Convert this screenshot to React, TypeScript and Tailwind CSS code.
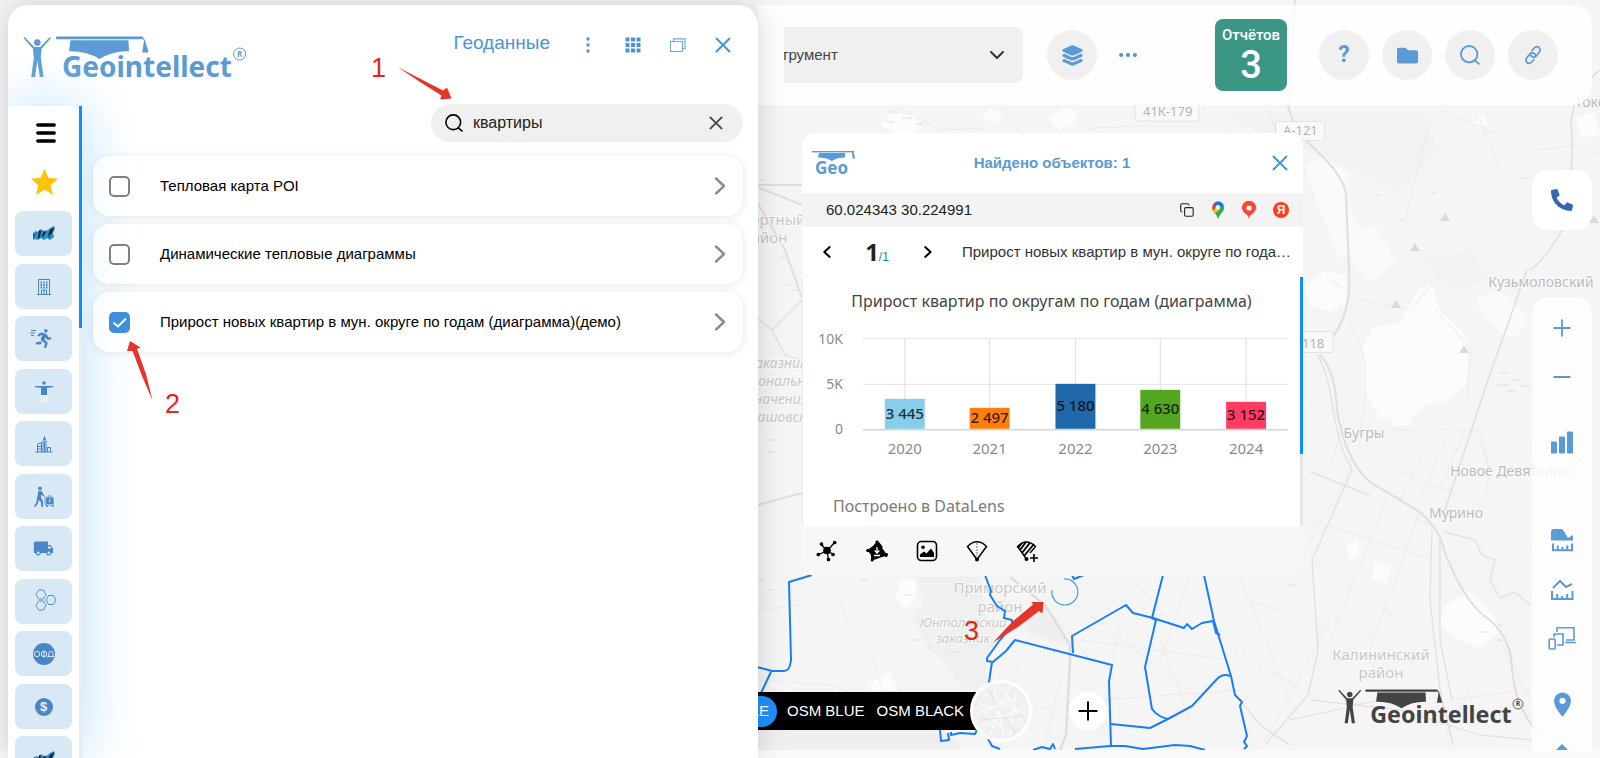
import type { ReactNode } from "react";
import { FaFolder, FaPhoneAlt, FaRunning } from "react-icons/fa";
import { IoEllipsisHorizontal, IoLayers } from "react-icons/io5";
import { MdLocalShipping, MdLocationOn, MdStar } from "react-icons/md";

const layers = [
  { id: "poi", title: "Тепловая карта POI", checked: false },
  { id: "dynamic", title: "Динамические тепловые диаграммы", checked: false },
  {
    id: "growth",
    title: "Прирост новых квартир в мун. округе по годам (диаграмма)(демо)",
    checked: true,
  },
];

const chartData = [
  { year: "2020", label: "3 445", x: 102, top: 79, fill: "#87ceeb" },
  { year: "2021", label: "2 497", x: 187, top: 88, fill: "#ff7f0e" },
  { year: "2022", label: "5 180", x: 273, top: 64, fill: "#1f68a9" },
  { year: "2023", label: "4 630", x: 358, top: 70, fill: "#54a520" },
  { year: "2024", label: "3 152", x: 444, top: 82, fill: "#ff3d64" },
];

function Logo({ className }: { className: string }) {
  return (
    <svg viewBox="0 0 226 52" className={className} fill="currentColor">
      <circle cx="15.3" cy="8.6" r="3.3" />
      <path d="M2.6 3 L12.3 13 H18.3 L28 3 L29 4 L19.6 14.8 L18.8 24 L21.6 43 H17.8 L15.4 27 L13 43 H9.2 L11.8 24 L11 14.8 L1.6 4 Z" />
      <rect x="34" y="2.6" width="87" height="2.6" rx="1" />
      <path d="M48.5 6.2 H106.5 L107 17.3 Q91 16.6 77.5 25 Q64 16.6 47 17.3 Z" />
      <path d="M120 3 Q122.6 4 123.2 7 L126.6 18.4 H120.2 L122 7 Z" />
      <text x="40" y="42.5" className="font-['Noto_Sans'] text-[28px] font-bold">
        Geointellect
      </text>
      <circle cx="217.6" cy="20" r="6" fill="none" stroke="currentColor" strokeWidth="1" />
      <text x="217.6" y="23" textAnchor="middle" className="font-['Noto_Sans'] text-[8px] font-bold">
        R
      </text>
    </svg>
  );
}

function SmallLogo() {
  return (
    <svg viewBox="0 0 44 30" className="w-11 h-[30px] text-[#5b9bd5]" fill="currentColor">
      <rect x="0" y="3" width="42" height="1.4" />
      <path d="M7 5 H33 V9.6 Q25 9.6 20 13 Q14 9.6 6 9.6 Z" />
      <path d="M40 3.4 H41.6 L43 10.5 H40.6 Z" />
      <text x="3" y="26" className="font-['Noto_Sans'] text-[17px] font-bold">
        Geo
      </text>
    </svg>
  );
}

function SearchIcon({ className }: { className: string }) {
  return (
    <svg viewBox="0 0 20 20" className={className} fill="none" stroke="currentColor" strokeWidth="1.8" strokeLinecap="round">
      <circle cx="9.2" cy="9.2" r="8.2" />
      <path d="M15 15.6 L18.8 18.8" />
    </svg>
  );
}

function CloseIcon({ className }: { className: string }) {
  return (
    <svg viewBox="0 0 16 16" className={className} fill="none" stroke="currentColor" strokeWidth="2" strokeLinecap="round">
      <path d="M1.5 1.5 L14.5 14.5 M14.5 1.5 L1.5 14.5" />
    </svg>
  );
}

function Chevron({ d, className }: { d: string; className: string }) {
  return (
    <svg viewBox="0 0 20 20" className={className} fill="none" stroke="currentColor" strokeLinecap="round" strokeLinejoin="round">
      <path d={d} />
    </svg>
  );
}

/* Category icons */

function RegionIcon() {
  return (
    <svg viewBox="0 0 24 16" className="w-6 h-4">
      <path d="M1 7 L4 5 L6 6 L9 3 L12 5 L16 4 L18 2 L22 0 L23 3 L21 7 L22 11 L18 14 L15 12 L12 14 L9 12 L6 14 L3 13 L1 14 Z" fill="#2b8fc4" />
      <path d="M7 4 L9 5 L8 11 L6 13 Z M12 5 L14 6 L11 11 L10 10 Z M18 4 L22 1 L20 7 L18 9 L17 13 L16.5 8 Z M1 9 L2.6 8 L2 12 Z" fill="#0c2233" />
    </svg>
  );
}

function BuildingIcon() {
  return (
    <svg viewBox="0 0 16 18" className="w-4 h-[18px]" fill="none" stroke="currentColor">
      <path d="M2.5 16 V1.5 H13.5 V16 M1 16.5 H15" />
      <path d="M4.5 4.5 H6 M7.2 4.5 H8.8 M10 4.5 H11.5 M4.5 7 H6 M7.2 7 H8.8 M10 7 H11.5 M4.5 9.5 H6 M7.2 9.5 H8.8 M10 9.5 H11.5" strokeWidth="1.8" />
      <path d="M5.5 16 V12 H10.5 V16 M8 12 V16" />
    </svg>
  );
}

function RunnerIcon() {
  return (
    <div className="relative">
      <FaRunning size={19} />
      <svg viewBox="0 0 6 8" className="absolute -left-1 top-0 w-1.5 h-2" stroke="currentColor">
        <path d="M1 1.5 H6 M0 4 H5 M1 6.5 H4" />
      </svg>
    </div>
  );
}

function PersonIcon() {
  return (
    <svg viewBox="0 0 20 24" className="w-5 h-6" fill="currentColor">
      <circle cx="10" cy="3" r="1.8" />
      <path d="M1 6 H19 V7.2 L13 7.8 V15 H7 V7.8 L1 7.2 Z" />
      <path d="M7.5 15 V23 M12.5 15 V23 M10 15 V22" stroke="#f3f8fc" strokeWidth="1.2" />
    </svg>
  );
}

function CityIcon() {
  return (
    <svg viewBox="0 0 18 18" className="w-[18px] h-[18px]" fill="none" stroke="currentColor">
      <path d="M0.5 17 H17.5 M8 17 V6 L9.5 2 L11 6 V17 M9.5 6 V17 M2.5 17 V9 L6.5 7.5 V17 M2.5 11.5 H6 M2.5 14 H6 M12.5 12 V17 M12.5 12.5 H15.5 V17" />
      <path d="M9.5 0 L10.4 5 H8.6 Z" fill="currentColor" stroke="none" />
    </svg>
  );
}

function LuggageIcon() {
  return (
    <svg viewBox="0 0 20 22" className="w-5 h-[22px]" fill="currentColor">
      <circle cx="6" cy="2.4" r="1.9" />
      <path d="M4.4 5 H7.4 L10.4 9.4 L9.8 10.4 L7.2 8.4 V12 L9 15 V21 H7.4 L6.8 15.8 L4.8 14 L3.6 18 L1.2 21 L0 20 L2.2 17 Z" />
      <rect x="12" y="11.5" width="7.6" height="6.5" rx="0.6" />
      <path d="M14 11.5 V10 H17.6 V11.5 M11 10 V19 H20" fill="none" stroke="currentColor" strokeWidth="0.8" />
      <circle cx="13" cy="20" r="1" />
      <circle cx="18.6" cy="20" r="1" />
      <path d="M15.8 13 V16.6" stroke="#d9e8f5" />
    </svg>
  );
}

function HexIcon() {
  return (
    <svg viewBox="0 0 22 22" className="mb-1 ml-1 w-[22px] h-[22px]" fill="none" stroke="currentColor" strokeWidth="0.9">
      <path d="M3.6 1 H8.4 L11 5.5 L8.4 10 H3.6 L1 5.5 Z" />
      <path d="M3.6 12 H8.4 L11 16.5 L8.4 21 H3.6 L1 16.5 Z" />
      <path d="M13.6 6.5 H18.4 L21 11 L18.4 15.5 H13.6 L11 11 Z" />
    </svg>
  );
}

function OfdIcon() {
  return (
    <svg viewBox="0 0 24 24" className="w-6 h-6">
      <circle cx="12" cy="12" r="11" fill="currentColor" />
      <g fill="none" stroke="#d9e8f5">
        <circle cx="5" cy="12" r="2.7" />
        <circle cx="12" cy="12" r="2.7" />
        <path d="M12 8.5 V15.5 M15.6 15.5 V14.5 H22 V15.5 M16.8 14.5 V11.5 Q17 9.3 19 9.3 Q21 9.3 21 11.5 V14.5" />
      </g>
    </svg>
  );
}

function DollarIcon() {
  return (
    <span className="flex size-[18px] items-center justify-center rounded-full bg-[#4a86c5] text-[13px] font-bold text-[#e8f2fa]">
      $
    </span>
  );
}

const categories: { name: string; icon: ReactNode }[] = [
  { name: "Регион", icon: <RegionIcon /> },
  { name: "Здания", icon: <BuildingIcon /> },
  { name: "Трафик", icon: <RunnerIcon /> },
  { name: "Население", icon: <PersonIcon /> },
  { name: "Город", icon: <CityIcon /> },
  { name: "Туризм", icon: <LuggageIcon /> },
  { name: "Логистика", icon: <MdLocalShipping size={21} /> },
  { name: "Сетки", icon: <HexIcon /> },
  { name: "ОФД", icon: <OfdIcon /> },
  { name: "Финансы", icon: <DollarIcon /> },
  { name: "Другие", icon: <RegionIcon /> },
];

function MapBackground() {
  return (
    <svg
      viewBox="0 0 1600 750"
      preserveAspectRatio="xMidYMid slice"
      className="absolute inset-x-0 top-0 h-[calc(100%-8px)] w-full font-['Noto_Sans']"
      fill="none"
    >
      <rect width="1600" height="750" fill="#f5f5f5" />
      {/* open ground */}
      <g fill="#fcfcfc">
        <path d="M1305 165 L1325 158 L1350 175 L1345 205 L1372 240 L1340 260 L1322 215 Z M1352 235 L1375 225 L1395 262 L1372 282 L1352 262 Z" opacity="0.7" />
        <path d="M1362 350 L1372 328 L1400 322 L1418 290 L1432 284 L1440 312 L1462 330 L1470 352 L1466 385 L1450 400 L1425 405 L1410 420 L1380 418 L1366 395 Z" />
        <path d="M1445 605 L1470 592 L1492 614 L1500 632 L1480 648 L1455 638 L1440 622 Z" />
        <path d="M1305 285 L1325 272 L1345 275 L1348 300 L1330 312 L1310 305 Z" />
        <path d="M880 125 L892 112 L915 116 L922 128 L905 138 Z M1048 118 L1062 108 L1078 110 L1074 124 L1058 130 Z M990 108 L1002 116 L996 124 L982 118 Z" />
        <path d="M1475 300 L1500 290 L1530 320 L1512 340 L1488 322 Z" opacity="0.7" />
        <path d="M900 582 L918 577 L914 602 L905 610 L896 598 Z M868 684 L888 672 L898 690 L884 702 Z M824 694 L838 700 L830 708 Z" />
        <path d="M1575 118 L1594 112 L1600 135 L1582 138 Z M1472 122 L1484 114 L1488 124 L1478 130 Z" />
        <path d="M1375 560 L1392 568 L1386 584 L1372 578 Z M1345 545 L1358 540 L1360 556 L1350 560 Z M1388 405 L1408 402 L1410 425 L1392 426 Z" />
      </g>
      <g fill="#efefef">
        <path d="M757 697 L900 690 L960 745 V750 H757 Z" />
        <path d="M915 577 L925 600 L912 620 L930 650 L942 660 L965 690 L988 690 L985 660 L1000 640 L985 610 L980 577 Z" opacity="0.8" />
        <path d="M1020 620 L1048 605 L1068 645 L1030 635 Z" />
        <path d="M1220 115 L1420 112 L1440 150 L1400 190 L1330 160 Z M1420 260 L1470 250 L1490 280 L1450 290 Z" opacity="0.5" />
      </g>
      {/* minor streets */}
      <g stroke="#ebebeb" strokeWidth="1">
        <path d="M1310 470 L1440 530 M1310 520 L1430 560 M1310 560 L1430 640 M1325 610 L1440 680 M1350 470 L1300 560 M1390 490 L1330 640 M1420 510 L1370 650 M1310 400 L1345 415 L1330 470" />
        <path d="M1425 450 L1400 500 M1445 440 L1420 500 M1465 430 L1440 490 M1395 470 L1470 500 M1380 430 L1480 430 L1490 470" />
        <path d="M1070 600 L1200 700 M1040 600 L1090 660 M1100 577 L1140 620 M1130 577 L1170 620 M1080 640 L1230 660 M1100 700 L1240 690 M1160 640 L1190 720 M1120 620 L1100 740 M1190 577 L1160 660" />
        <path d="M1000 690 L1110 735 M1020 660 L1000 740 M1060 680 L1045 745 M1240 577 L1290 700 M1250 600 L1330 630 M1235 650 L1320 700 M1260 750 L1330 620" />
        <path d="M840 600 L848 622 L872 655 L885 700 M757 680 L830 685 L870 700 M757 610 L800 605" />
        <path d="M1330 280 L1360 300 L1410 310 L1440 275 M1350 320 L1365 360 L1366 400 L1358 440 M1435 310 L1455 330 L1470 350 L1468 400 L1440 425" />
        <path d="M1440 110 L1500 135 L1540 150 L1575 145 L1600 155 M1480 120 L1500 170 L1485 190 M1270 110 L1290 190 L1310 200 M1430 120 L1405 220" />
        <path d="M900 108 L940 130 L980 128 M1000 108 L1020 132 M1090 128 L1150 126 M1200 108 L1230 132" />
        <path d="M1480 440 L1490 470 L1485 500 M1500 640 L1530 700 M1540 600 L1590 650 M1470 690 L1440 745 M1450 700 L1530 690" />
      </g>
      {/* main roads and railways */}
      <g stroke="#dedede" strokeWidth="2">
        <path d="M1295 0 L1288 105 Q1293 130 1318 152 Q1345 178 1346 195 L1349 270 Q1352 315 1330 340 M1320 355 Q1335 370 1337 410 Q1345 460 1370 482 Q1400 500 1420 512" />
        <path d="M1420 512 Q1440 530 1444 550 Q1465 605 1490 620 Q1512 640 1512 670 Q1516 710 1540 735" />
        <path d="M1318 355 Q1330 380 1333 410 Q1340 450 1350 465 L1352 470 L1312 560 L1318 650 L1308 695 L1265 745" strokeWidth="1.2" />
        <path d="M1440 535 V600 L1440 640 L1452 700 M1432 530 L1430 600 L1440 690 L1453 745" strokeWidth="1.2" />
        <path d="M1527 270 L1488 380 L1445 510" strokeWidth="1.5" />
        <path d="M1600 70 Q1575 90 1571 120 Q1575 180 1562 230 Q1545 260 1530 270" strokeWidth="1.5" />
        <path d="M1010 577 L1045 605 L1070 645 L1070 660 L1066 735 L1060 750" strokeWidth="2.5" />
        <path d="M757 187 L802 205 M757 185 H802 M757 202 L785 250 L802 298 M757 505 L802 493" />
        <path d="M757 318 L772 330 L802 300 M772 330 L785 355 L802 360" strokeWidth="1.2" />
        <path d="M1240 700 L1260 725 L1290 745 M1310 700 L1400 710 L1480 735 L1532 740" strokeWidth="1.2" />
        <path d="M1310 472 L1370 495 M1290 720 L1380 700" strokeWidth="1.2" />
        <path d="M1445 532 L1475 540 L1482 555 L1495 560 L1490 580 L1500 598 L1515 592 L1530 605" stroke="#e6e6e6" />
      </g>
      {/* marsh hatching */}
      <path
        d="M890 112 h8 M902 118 h10 M886 122 h8 M915 124 h8 M760 180 h5 M762 240 h6 M780 258 h8 M785 285 h6 M792 290 h6 M765 440 h10 M768 452 h7 M758 580 h6 M768 590 h5 M762 600 h5 M1500 373 h8 M1512 380 h9 M1498 385 h12 M1520 386 h10 M1508 391 h8 M860 580 h8 M905 595 h8 M960 590 h8 M985 610 h8 M950 652 h8 M970 645 h8 M912 640 h8 M925 648 h8 M1375 195 h5 M1430 193 h6 M1400 220 h4 M1290 585 h8 M1480 632 h7 M1497 625 h6 M1495 640 h7 M1520 178 h6"
        stroke="#dedede"
      />
      <g fill="#dadada">
        <path d="M1391 308 l5 -8 5 8 Z M1459 353 l5 -8 5 8 Z M1440 221 l5 -8 5 8 Z M1410 251 l5 -8 5 8 Z M1589 223 l5 -8 5 8 Z" />
      </g>
      {/* road numbers */}
      <g stroke="#e2e2e2" fill="#f9f9f9">
        <rect x="1135" y="98" width="64" height="23" rx="2" />
        <rect x="1275.5" y="121.5" width="49" height="19" rx="2" />
        <rect x="1290" y="331.5" width="43" height="21" rx="2" />
      </g>
      <g fill="#b4b4b4" className="text-[13px]">
        <text x="1143" y="116">41К-179</text>
        <text x="1283" y="135">А-121</text>
        <text x="1302" y="348">118</text>
      </g>
      <g fill="#bcbcbc" textAnchor="middle" stroke="#fafafa" strokeWidth="2" paintOrder="stroke">
        <g className="text-[14px]">
          <text x="1541" y="287">Кузьмоловский</text>
          <text x="1364" y="438">Бугры</text>
          <text x="1510" y="476">Новое Девяткино</text>
          <text x="1456" y="518">Мурино</text>
          <text x="1602" y="107">Токсово</text>
        </g>
        <g className="text-[15px]" fill="#c8c8c8">
          <text x="1381" y="660">Калининский</text>
          <text x="1381" y="678">район</text>
          <text x="1000" y="593">Приморский</text>
          <text x="1000" y="612">район</text>
          <text x="765" y="225">Курортный</text>
          <text x="765" y="243">район</text>
        </g>
        <g className="text-[13px] italic" fill="#c8c8c8">
          <text x="963" y="627">Юнтоловский</text>
          <text x="963" y="643">заказник</text>
        </g>
        <g className="text-[14px] italic" fill="#c8c8c8">
          <text x="778" y="368">заказник</text>
          <text x="778" y="386">регионального</text>
          <text x="778" y="404">значения</text>
          <text x="778" y="422">Левашовский</text>
        </g>
      </g>
      {/* municipal borders */}
      <g stroke="#1a7df5" strokeWidth="2" strokeLinejoin="round">
        <path d="M812 575 L789 582 L791 660 Q790 671 784 671 H772 L757 667 M771 672 L761 693" />
        <path d="M985 575 L991 591 L990 595 L997 606 L1005 611 L1004 618 L1012 620 L1012 626 L1000 640 L987 658 V661 L993 662 L1006 651 L1015 640 L1112 665 L1109 681 L1111 746" />
        <path d="M992 662 L990 675 L988 690 M940 730 L941 741 L949 740 L948 733 M951 732 V735 L960 733 L975 734 L978 728" />
        <path d="M1073 653 L1072 636 L1126 605 L1133 613 L1153 618 L1184 628 L1187 624 L1192 629 L1202 623 L1213 621 L1216 633 L1220 635" />
        <path d="M1163 575 L1152 618 L1156 620 L1145 667 L1152 709 Q1158 717 1168 719 L1192 706 L1217 679 Q1223 673 1230 676" />
        <path d="M1204 575 L1214 621 L1231 676 L1235 695 L1242 702 L1240 706 L1247 736 L1244 742 L1247 746 L1244 749" />
        <path d="M1111 724 L1150 728 L1168 719 M1075 749 L1110 746 H1125 L1143 749 L1175 745 L1190 746 L1205 750" />
        <path d="M988 739 L992 746 L1000 749 M1033 750 L1042 747 L1050 749 L1053 744 L1055 749 M1072 575 L1074 579 L1084 575" />
      </g>
      <path d="M1052 590 A13 13 0 1 0 1064 579" stroke="#4a9be0" strokeWidth="1.2" />
    </svg>
  );
}

function Chart() {
  return (
    <svg viewBox="0 0 498 146" className="block w-full font-['Noto_Sans']">
      <path d="M60 18.5 H486 M60 64.5 H486" stroke="#e2e2e2" />
      <path d="M60 110 H486" stroke="#d6d6d6" strokeWidth="1.5" />
      <g fill="#8a8a8a" textAnchor="end" className="text-[14px]">
        <text x="40" y="24">10K</text>
        <text x="40" y="69">5K</text>
        <text x="40" y="114">0</text>
      </g>
      {chartData.map((d) => (
        <g key={d.year} textAnchor="middle">
          <path d={`M${d.x} 19 V${d.top}`} stroke="#dedede" />
          <rect x={d.x - 20} y={d.top} width="40" height={109 - d.top} fill={d.fill} />
          <text x={d.x} y={(d.top + 109) / 2 + 5} fill="#000" fillOpacity="0.8" className="text-[15px] font-medium">
            {d.label}
          </text>
          <text x={d.x} y="134" fill="#8a8a8a" className="text-[15px]">
            {d.year}
          </text>
        </g>
      ))}
    </svg>
  );
}

function SidePanel() {
  return (
    <section className="relative z-10 ml-2 mt-[5px] flex max-w-[750px] flex-1 flex-col overflow-hidden rounded-t-[20px] bg-white shadow-[0_0_30px_rgba(0,0,0,0.16)]">
      <header className="flex h-[101px] shrink-0 items-center pb-[22px] pl-3.5 pr-[25px] text-[#4a94d6]">
        <Logo className="mt-[30px] h-[52px] w-[226px] text-[#5b9bd5]" />
        <h1 className="mb-0.5 ml-auto text-[19px]">Геоданные</h1>
        <button aria-label="Меню" className="ml-[28px] flex w-5 justify-center">
          <svg viewBox="0 0 4 16" className="h-4 w-1" fill="currentColor">
            <path d="M0.5 0.5 h3 v3 h-3 Z M0.5 6.5 h3 v3 h-3 Z M0.5 12.5 h3 v3 h-3 Z" />
          </svg>
        </button>
        <button aria-label="Плитка" className="ml-[25px] flex w-5 justify-center">
          <svg viewBox="0 0 16 16" className="size-4" fill="currentColor">
            <path d="M0.5 0.5 h4 v4 h-4 Z M6 0.5 h4 v4 h-4 Z M11.5 0.5 h4 v4 h-4 Z M0.5 6 h4 v4 h-4 Z M6 6 h4 v4 h-4 Z M11.5 6 h4 v4 h-4 Z M0.5 11.5 h4 v4 h-4 Z M6 11.5 h4 v4 h-4 Z M11.5 11.5 h4 v4 h-4 Z" />
          </svg>
        </button>
        <button aria-label="Окно" className="ml-[25px] flex w-5 justify-center">
          <svg viewBox="0 0 16 14" className="h-3.5 w-4" fill="none" stroke="currentColor" strokeOpacity="0.8">
            <rect x="0.5" y="3.5" width="12" height="10" />
            <path d="M3.5 3.5 V0.8 H15 V10.5 H12.5" strokeWidth="1.2" />
          </svg>
        </button>
        <button aria-label="Закрыть" className="ml-[25px] flex w-5 justify-center">
          <CloseIcon className="size-4" />
        </button>
      </header>

      <div className="flex min-h-0 flex-1">
        <nav className="flex shrink-0 rounded-tr-xl bg-white shadow-[0_0_60px_#b9dffb]">
          <div className="flex w-[71px] flex-col items-center overflow-hidden pt-[17px]">
            <button aria-label="Список" className="pl-1">
              <svg viewBox="0 0 20 20" className="size-5" stroke="#000" strokeWidth="3.4" strokeLinecap="round">
                <path d="M1.8 2 H18.2 M1.8 10 H18.2 M1.8 18 H18.2" />
              </svg>
            </button>
            <button aria-label="Избранное" className="mb-3 mt-[23px] pl-0.5 text-[#ffc20e]">
              <MdStar size={33} />
            </button>
            {categories.map((c, i) => (
              <button
                key={i}
                aria-label={c.name}
                className="flex h-[45px] w-[57px] shrink-0 items-center justify-center rounded-lg bg-[#d9e8f5] text-[#4a86c5] odd:mb-2 even:mb-[7px]"
              >
                {c.icon}
              </button>
            ))}
          </div>
          <div className="w-[3px] bg-[#ebebeb]">
            <div className="h-[34%] bg-[#0a8fff]" />
          </div>
        </nav>

        <div className="relative flex flex-1 flex-col pl-[11px] pr-[15px]">
          <label className="-mt-0.5 flex h-[38px] w-[312px] items-center self-end rounded-full bg-[#f0f0f0] pl-3.5 pr-5">
            <SearchIcon className="size-[18px] text-black" />
            <input
              aria-label="Поиск"
              defaultValue="квартиры"
              className="ml-2.5 min-w-0 flex-1 bg-transparent text-[16px] text-[#222] outline-none"
            />
            <button aria-label="Очистить">
              <CloseIcon className="size-3.5 text-[#444]" />
            </button>
          </label>
          <ul className="mt-3.5 flex flex-col gap-2">
            {layers.map((l) => (
              <li
                key={l.id}
                className="flex h-[60px] items-center rounded-2xl bg-white/70 pl-4 pr-3.5 shadow-[0_1px_8px_rgba(0,0,0,0.1)]"
              >
                <span className="relative flex size-[21px]">
                  <input
                    id={l.id}
                    type="checkbox"
                    defaultChecked={l.checked}
                    className="peer size-[21px] appearance-none rounded-[5px] border-2 border-[#808080] bg-white checked:border-[#3f8fdb] checked:bg-[#3f8fdb]"
                  />
                  <svg viewBox="0 0 21 21" className="pointer-events-none absolute inset-0 hidden peer-checked:block" fill="none" stroke="#fff" strokeWidth="1.8" strokeLinecap="round">
                    <path d="M5 11 L9 14.5 L16.5 7" />
                  </svg>
                </span>
                <label htmlFor={l.id} className="ml-[30px] flex-1 text-[15px] text-black">
                  {l.title}
                </label>
                <Chevron d="M7 2.5 L15 10 L7 17.5" className="size-5 stroke-[2.4] text-[#8c8c8c]" />
              </li>
            ))}
          </ul>
        </div>
      </div>
    </section>
  );
}

function RoundButton({ label, children }: { label: string; children: ReactNode }) {
  return (
    <button aria-label={label} className="flex size-[50px] items-center justify-center rounded-full bg-[#f0f0f0] text-[#5b9bd5]">
      {children}
    </button>
  );
}

function TopBar() {
  return (
    <header className="mt-[5px] flex h-[100px] shrink-0 items-center rounded-r-[20px] bg-white/85 pl-[26px] pr-[34px]">
      <div className="relative flex h-14 w-[239px] justify-end overflow-hidden rounded-r-lg bg-[#f0f0f0]">
        <select
          aria-label="Инструмент"
          className="h-14 w-[268px] shrink-0 appearance-none bg-transparent text-[15px] text-[#444]"
        >
          <option>Инструмент</option>
        </select>
        <Chevron d="M4 7 L10 13 L16 7" className="pointer-events-none absolute right-4 top-[18px] size-5 stroke-2 text-[#333]" />
      </div>
      <div className="ml-6">
        <RoundButton label="Слои">
          <IoLayers size={25} />
        </RoundButton>
      </div>
      <button aria-label="Ещё" className="ml-5 text-[#4a94d6]">
        <IoEllipsisHorizontal size={22} />
      </button>
      <button className="ml-auto flex size-[72px] flex-col items-center justify-center rounded-lg bg-[#3c9684] font-['Roboto'] text-white">
        <span className="text-[15px] font-medium leading-5">Отчётов</span>
        <span className="text-[38px] font-medium leading-10">3</span>
      </button>
      <div className="ml-8 flex gap-[13px]">
        <RoundButton label="Помощь">
          <span className="font-['Roboto'] text-[23px] font-bold">?</span>
        </RoundButton>
        <RoundButton label="Проекты">
          <FaFolder size={21} />
        </RoundButton>
        <RoundButton label="Поиск">
          <SearchIcon className="size-5" />
        </RoundButton>
        <RoundButton label="Ссылка">
          <svg viewBox="0 0 20 20" className="size-5" fill="none" stroke="currentColor" strokeWidth="1.7" strokeLinecap="round">
            <path d="M9 5.5 L11.2 3 Q13.6 0.4 16 2.5 Q18.2 4.8 16 7.6 L13 11 Q10.6 13.2 8.2 11.2 Q7 9.8 7.4 8.2" />
            <path d="M11 14.5 L8.8 17 Q6.4 19.6 4 17.5 Q1.8 15.2 4 12.4 L7 9 Q9.4 6.8 11.8 8.8 Q13 10.2 12.6 11.8" />
          </svg>
        </RoundButton>
      </div>
    </header>
  );
}

function CardTools() {
  return (
    <footer className="flex h-[50px] items-center gap-[28px] rounded-b-[14px] bg-[#f7f7f7] pl-[14px]">
      <button aria-label="Связи">
        <svg viewBox="0 0 22 22" className="size-[22px]" stroke="#000" strokeWidth="1.3">
          <path d="M11 11 L5 4 M11 11 L18.5 2.5 M11 11 L2.5 14.5 M11 11 L17 14 M11 11 L12.5 19.5" />
          <circle cx="11" cy="10.5" r="3.2" />
          <circle cx="5.5" cy="4" r="1.2" />
          <circle cx="18.7" cy="2.5" r="1.2" />
          <circle cx="2.3" cy="14.5" r="1.2" />
          <circle cx="17" cy="14.5" r="1.2" />
          <circle cx="12.5" cy="19.5" r="1.2" />
        </svg>
      </button>
      <button aria-label="Скачать полигон">
        <svg viewBox="0 0 22 22" className="size-[22px]" stroke="#000" strokeLinejoin="round">
          <path d="M11 2 L16 8.5 L20.5 15 L6 20 L5 14 L1.5 10.5 L7 6.5 Z" />
          <path d="M11 2 L15 7 M20 15.5 L20.5 14.5 M6.2 19.6 V20 M2 10.5 H1.6" strokeWidth="3" strokeLinecap="round" />
          <path d="M11 7 V12.5 M8.7 10.5 L11 13 L13.3 10.5 M8 15.5 H14" stroke="#fff" fill="none" strokeWidth="1.3" />
        </svg>
      </button>
      <button aria-label="Изображение">
        <svg viewBox="0 0 22 22" className="size-[22px]" fill="none" stroke="#000" strokeWidth="1.6">
          <rect x="1.5" y="1.5" width="19" height="19" rx="4" />
          <path d="M4 17 V14.5 L8 11.5 L10.5 13.5 L15 8.5 L18 13 V17 Z" fill="#000" stroke="none" />
          <circle cx="7" cy="7.2" r="1.8" fill="#000" stroke="none" />
        </svg>
      </button>
      <button aria-label="Сектор">
        <svg viewBox="0 0 22 22" className="size-[22px]" fill="none" stroke="#000" strokeWidth="1.5">
          <path d="M11 19.5 L1.5 6.5 Q11 -3 20.5 6.5 Z" />
          <path d="M11 3 V16" strokeWidth="1.2" strokeDasharray="2 1" stroke="#888" />
          <circle cx="11" cy="19.5" r="2" fill="#000" stroke="none" />
        </svg>
      </button>
      <button aria-label="Добавить сектор">
        <svg viewBox="0 0 22 22" className="size-[22px]" fill="none" stroke="#000" strokeWidth="1.4">
          <path d="M10.5 19 L1.5 6.5 Q10.5 -2.5 19.5 6.5 L14 13" />
          <path d="M4 10 L10 2 M6 13 L14 2.6 M8 16 L18 4 M2 8 L6 3" strokeWidth="1.8" />
          <circle cx="10.5" cy="19" r="2" fill="#000" stroke="none" />
          <path d="M18 14 V22 M14 18 H22" strokeWidth="1.6" />
        </svg>
      </button>
    </footer>
  );
}

function InfoCard() {
  return (
    <article className="mt-7 w-[501px] max-w-full">
      <div className="flex h-[60px] items-center rounded-t-[14px] bg-white pl-[10px] pr-[15px] text-[#5b9bd5]">
        <SmallLogo />
        <h2 className="flex-1 pr-6 text-center text-[15px] font-bold">Найдено объектов: 1</h2>
        <button aria-label="Закрыть карточку" className="text-[#4a94d6]">
          <CloseIcon className="size-4" />
        </button>
      </div>
      <div className="flex h-[34px] items-center bg-[#f3f3f3] pl-6 pr-3.5">
        <span className="flex-1 text-[15px] text-[#222]">60.024343 30.224991</span>
        <button aria-label="Копировать">
          <svg viewBox="0 0 14 14" className="size-3.5" fill="none" stroke="#222" strokeWidth="1.1">
            <rect x="4.6" y="4.6" width="8.6" height="8.6" rx="1.2" />
            <path d="M2.4 9 Q0.7 9 0.7 7.5 V2 Q0.7 0.7 2 0.7 H7.5 Q9 0.7 9 2.4" />
          </svg>
        </button>
        <a href="#google" aria-label="Google Карты" className="ml-[17px]">
          <svg viewBox="0 0 14 18" className="h-[18px] w-3.5">
            <path d="M7 18 Q6 14 3 11 Q1 9 1 7 L7 6 L13 5 Q14 8 11.5 11 Q8 14.5 7 18 Z" fill="#34a853" />
            <path d="M1 7 Q1 4 3 2.5 L6 5 L8.5 9 L4 12.3 Q1 9.5 1 7 Z" fill="#fbbc04" />
            <path d="M1.6 4.5 Q2 3.5 3 2.3 L6 5 L2.2 9.4 Q0.6 7 1.6 4.5 Z" fill="#ea4335" />
            <path d="M2.8 2.4 Q5 0 8 0.4 Q11.5 1 12.8 4.4 L8 8 L5 5 Z" fill="#1a73e8" />
            <circle cx="7" cy="6.2" r="2.2" fill="#fff" />
          </svg>
        </a>
        <a href="#yandex-maps" aria-label="Яндекс Карты" className="ml-[17px]">
          <svg viewBox="0 0 14 18" className="h-[18px] w-3.5">
            <path d="M7 18 Q6.6 14.5 4 13 A7 7 0 1 1 10 13 Q7.4 14.5 7 18 Z" fill="#f43" />
            <circle cx="7" cy="7" r="2.6" fill="#fff" />
          </svg>
        </a>
        <a
          href="#yandex"
          aria-label="Яндекс"
          className="ml-[17px] flex size-4 items-center justify-center rounded-full bg-[#fc3f1d] text-[12px] font-bold text-white"
        >
          Я
        </a>
      </div>
      <div className="flex h-[50px] items-center bg-white pl-4">
        <button aria-label="Назад">
          <Chevron d="M13 4.5 L7 10 L13 15.5" className="size-[18px] stroke-[2.2] text-black" />
        </button>
        <span className="flex w-[82px] items-baseline justify-center text-[#1b7fa8]">
          <b className="font-['Noto_Sans'] text-[24px] text-[#222]">1</b>
          <span className="text-[12px]">/1</span>
        </span>
        <button aria-label="Вперёд">
          <Chevron d="M8 4.5 L14 10 L8 15.5" className="size-[18px] stroke-[2.2] text-black" />
        </button>
        <p className="ml-[26px] mr-2 flex-1 truncate text-[15px] text-[#333]">
          Прирост новых квартир в мун. округе по годам (диаграмма)(демо)
        </p>
      </div>
      <div className="flex h-[249px] bg-white">
        <div className="flex min-w-0 flex-1 flex-col border-l border-[#ececec]">
          <h3 className="mt-3 text-center font-['Noto_Sans'] text-[16px] leading-6 text-[#444]">
            Прирост квартир по округам по годам (диаграмма)
          </h3>
          <div className="mt-[7px]">
            <Chart />
          </div>
          <a href="#datalens" className="ml-[30px] mt-[28px] font-['Noto_Sans'] text-[16px] leading-6 text-[#7a7a7a]">
            Построено в DataLens
          </a>
        </div>
        <div className="w-[3px] bg-[#e6e6e6]">
          <div className="h-[71%] bg-[#0a8fff]" />
        </div>
      </div>
      <CardTools />
    </article>
  );
}

function BottomBar() {
  return (
    <div className="mt-auto mb-4 flex h-[62px] items-center">
      <div className="flex h-[38px] items-center bg-black pr-3 text-[15px] text-white">
        <button className="-ml-[52px] mr-[10px] h-[31px] rounded-full bg-[#1e90ff] pl-2 pr-2">
          SIMPLE
        </button>
        <button className="mr-3">OSM BLUE</button>
        <button>OSM BLACK</button>
      </div>
      <button aria-label="Подложка" className="-ml-[6px]">
        <svg viewBox="0 0 62 62" className="size-[62px]">
          <circle cx="31" cy="31" r="29.5" fill="#f0f0f0" stroke="#fff" strokeWidth="3" />
          <path
            d="M8 22 L52 46 M14 14 L56 34 M24 6 L34 58 M40 6 L20 56 M6 34 L50 16 M12 46 L56 26 M30 4 L54 44 M10 28 L40 56 M46 12 L40 54"
            stroke="#fafafa"
            strokeWidth="1.4"
          />
          <path d="M10 40 L54 36 M18 10 L46 54" stroke="#e2e2e2" />
        </svg>
      </button>
      <button aria-label="Добавить подложку" className="ml-[37px] flex size-[38px] items-center justify-center rounded-full bg-white">
        <svg viewBox="0 0 20 20" className="size-5" stroke="#000" strokeWidth="2">
          <path d="M10 0.5 V19.5 M0.5 10 H19.5" />
        </svg>
      </button>
      <Logo className="mb-1 ml-auto mr-[7px] h-11 w-[188px] text-[#444]" />
    </div>
  );
}

function MapTools() {
  return (
    <aside className="flex w-[60px] shrink-0 flex-col pt-[65px] text-[#5b9bd5]">
      <button aria-label="Позвонить" className="flex h-[60px] shrink-0 items-center justify-center rounded-2xl bg-white text-[#3767ae]">
        <FaPhoneAlt size={22} />
      </button>
      <div className="mb-2 mt-[67px] flex min-h-0 flex-1 flex-col items-center overflow-hidden rounded-t-2xl bg-white/80 pt-[22px]">
        <button aria-label="Приблизить">
          <svg viewBox="0 0 18 18" className="size-[18px]" stroke="currentColor" strokeWidth="1.8">
            <path d="M9 0.5 V17.5 M0.5 9 H17.5" />
          </svg>
        </button>
        <button aria-label="Отдалить" className="mt-[31px]">
          <svg viewBox="0 0 18 18" className="size-[18px]" stroke="currentColor" strokeWidth="1.8">
            <path d="M0.5 9 H17.5" />
          </svg>
        </button>
        <button aria-label="Аналитика" className="mt-[44px]">
          <svg viewBox="0 0 24 24" className="size-6" fill="currentColor">
            <rect x="1" y="11.5" width="6" height="12" rx="1" />
            <rect x="9" y="6.5" width="6" height="17" rx="1" />
            <rect x="17" y="1.5" width="6" height="22" rx="1" />
          </svg>
        </button>
        <button aria-label="Площадь" className="mt-[74px]">
          <svg viewBox="0 0 24 24" className="size-6" fill="currentColor">
            <path d="M1 12.5 V4 Q1 1 4 1 H11 Q12.5 1 13.4 2.4 L18 10 L23 7 V12.5 Z" />
            <path d="M3 15.5 V22.2 H22 V15.5 M7.7 17.5 V22 M12.5 19 V22 M17.3 17.5 V22" fill="none" stroke="currentColor" strokeWidth="2" />
          </svg>
        </button>
        <button aria-label="Длина" className="mt-[25px]">
          <svg viewBox="0 0 24 24" className="size-6" fill="none" stroke="currentColor" strokeWidth="2">
            <path d="M3 11 L10 4 L16 10 L22 7" />
            <path d="M2 14 V22 H22.5 V14 M7.2 17 V22 M12.2 19 V22 M17.2 17 V22" />
          </svg>
        </button>
        <button aria-label="Устройства" className="mt-[25px]">
          <svg viewBox="0 0 28 24" className="h-6 w-7" fill="none" stroke="currentColor" strokeWidth="1.6">
            <path d="M9 6 V1.8 H26 V14 H18 M17 16.5 H28" />
            <path d="M6 11 V8 H15 V19 H9" />
            <rect x="1.2" y="13" width="6" height="10" rx="1" />
          </svg>
        </button>
        <button aria-label="Метка" className="mt-10">
          <MdLocationOn size={29} />
        </button>
        <button aria-label="Направление" className="mt-6">
          <svg viewBox="0 0 18 18" className="size-[18px]" fill="currentColor">
            <path d="M9 1 L17 9 L9 17 L1 9 Z" />
          </svg>
        </button>
      </div>
    </aside>
  );
}

/* Numbered steps drawn over the page */
function Steps() {
  return (
    <svg viewBox="0 0 1600 758" className="pointer-events-none absolute left-0 top-0 z-20 w-[1600px] max-w-none" fill="#e5352b">
      <path d="M398 67.3 L443 90.5 L447 87.5 L451.5 98.5 L440 99.5 L441.5 95.5 L420 82 Z" />
      <path d="M152.5 400.5 L142 376 L132.5 351 L127 351 L130 341 L140.5 347.5 L137 349 L146 374 Z" />
      <path d="M993 642.5 L1012 622 L1033 604.5 L1031.5 602 L1043.5 602 L1042.5 613.5 L1039 611 L1018 627 Z" />
      <g fill="#e1261c" className="text-[27px]">
        <text x="371" y="77">1</text>
        <text x="165" y="413">2</text>
        <text x="964" y="640">3</text>
      </g>
    </svg>
  );
}

export default function App() {
  return (
    <div className="relative flex h-screen overflow-hidden bg-[#fafafa] font-['Liberation_Sans',sans-serif]">
      <MapBackground />
      <SidePanel />
      <main className="relative mr-2 flex min-w-0 flex-1 flex-col">
        <TopBar />
        <div className="flex min-h-0 flex-1">
          <div className="flex min-w-0 flex-1 flex-col">
            <div className="pl-11">
              <InfoCard />
            </div>
            <BottomBar />
          </div>
          <MapTools />
        </div>
      </main>
      <Steps />
    </div>
  );
}
